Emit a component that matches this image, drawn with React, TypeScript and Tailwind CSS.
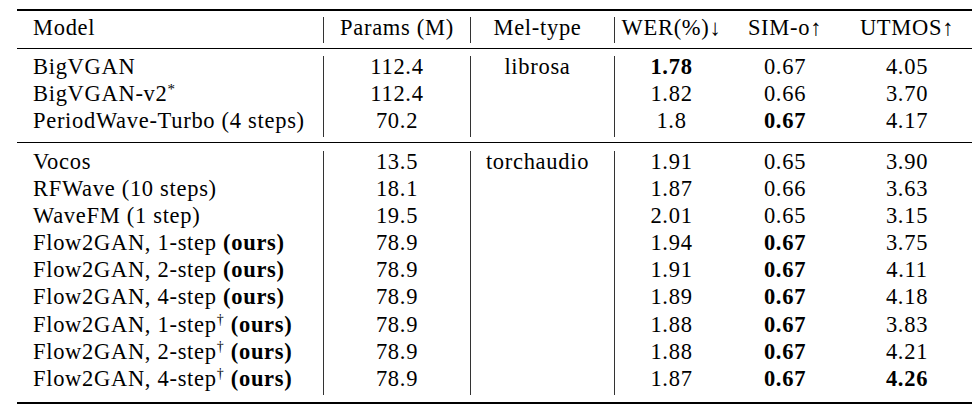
type Cell = { text: string; bold?: boolean }

type Row = {
  model: React.ReactNode
  params: string
  mel?: string
  wer: Cell
  sim: Cell
  utmos: Cell
}

const grid = 'grid grid-cols-[306px_147px_144px_114px_114px_130px]'

const Ours = () => <span className="font-bold">(ours)</span>
const Dag = () => <sup className="text-[14px] relative -top-[8px]">†</sup>

const section1: Row[] = [
  { model: 'BigVGAN', params: '112.4', mel: 'librosa', wer: { text: '1.78', bold: true }, sim: { text: '0.67' }, utmos: { text: '4.05' } },
  {
    model: (
      <>
        BigVGAN-v2<sup className="text-[15px] relative -top-[7px]">*</sup>
      </>
    ),
    params: '112.4',
    wer: { text: '1.82' },
    sim: { text: '0.66' },
    utmos: { text: '3.70' },
  },
  { model: 'PeriodWave-Turbo (4 steps)', params: '70.2', wer: { text: '1.8' }, sim: { text: '0.67', bold: true }, utmos: { text: '4.17' } },
]

const section2: Row[] = [
  { model: 'Vocos', params: '13.5', mel: 'torchaudio', wer: { text: '1.91' }, sim: { text: '0.65' }, utmos: { text: '3.90' } },
  { model: 'RFWave (10 steps)', params: '18.1', wer: { text: '1.87' }, sim: { text: '0.66' }, utmos: { text: '3.63' } },
  { model: 'WaveFM (1 step)', params: '19.5', wer: { text: '2.01' }, sim: { text: '0.65' }, utmos: { text: '3.15' } },
  { model: <>Flow2GAN, 1-step <Ours /></>, params: '78.9', wer: { text: '1.94' }, sim: { text: '0.67', bold: true }, utmos: { text: '3.75' } },
  { model: <>Flow2GAN, 2-step <Ours /></>, params: '78.9', wer: { text: '1.91' }, sim: { text: '0.67', bold: true }, utmos: { text: '4.11' } },
  { model: <>Flow2GAN, 4-step <Ours /></>, params: '78.9', wer: { text: '1.89' }, sim: { text: '0.67', bold: true }, utmos: { text: '4.18' } },
  { model: <>Flow2GAN, 1-step<Dag /> <Ours /></>, params: '78.9', wer: { text: '1.88' }, sim: { text: '0.67', bold: true }, utmos: { text: '3.83' } },
  { model: <>Flow2GAN, 2-step<Dag /> <Ours /></>, params: '78.9', wer: { text: '1.88' }, sim: { text: '0.67', bold: true }, utmos: { text: '4.21' } },
  { model: <>Flow2GAN, 4-step<Dag /> <Ours /></>, params: '78.9', wer: { text: '1.87' }, sim: { text: '0.67', bold: true }, utmos: { text: '4.26', bold: true } },
]

function Value({ cell }: { cell: Cell }) {
  return <span className={cell.bold ? 'font-bold' : ''}>{cell.text}</span>
}

function Section({ rows }: { rows: Row[] }) {
  return (
    <div className={grid}>
      {rows.map((r, i) => (
        <div key={i} className="contents">
          <div className="leading-[22px] pb-[5.2px] pl-4 whitespace-nowrap">{r.model}</div>
          <div className="leading-[22px] pb-[5.2px] text-center border-l border-[#333]">{r.params}</div>
          <div className="leading-[22px] pb-[5.2px] text-center border-l border-[#333] pr-[10px]">{r.mel ?? ''}</div>
          <div className="leading-[22px] pb-[5.2px] text-center border-l border-[#333]">
            <Value cell={r.wer} />
          </div>
          <div className="leading-[22px] pb-[5.2px] text-center">
            <Value cell={r.sim} />
          </div>
          <div className="leading-[22px] pb-[5.2px] text-center">
            <Value cell={r.utmos} />
          </div>
        </div>
      ))}
    </div>
  )
}

export default function App() {
  return (
    <div className="w-[980px] h-[414px] bg-white text-black [font-family:'Liberation_Serif','Times_New_Roman',serif] text-[22.5px] tracking-[0.7px] pt-[9px] pl-[17px]">
      <div className="w-[955px]">
        {/* top rule */}
        <div className="h-[1.6px] bg-black" />

        {/* header */}
        <div className={`${grid} mt-[6.7px]`}>
          <div className="leading-[22px] pb-[4px] pl-4">Model</div>
          <div className="leading-[22px] pb-[4px] text-center border-l border-[#333]">Params (M)</div>
          <div className="leading-[22px] pb-[4px] text-center border-l border-[#333] pr-[10px]">Mel-type</div>
          <div className="leading-[22px] pb-[4px] text-center border-l border-[#333]">WER(%)↓</div>
          <div className="leading-[22px] pb-[4px] text-center">SIM-o↑</div>
          <div className="leading-[22px] pb-[4px] text-center">UTMOS↑</div>
        </div>

        <div className="h-[1.2px] bg-black mt-[5px]" />

        <div className="mt-[6.1px]">
          <Section rows={section1} />
        </div>

        <div className="h-[1.2px] bg-black mt-[4.5px]" />

        <div className="mt-[7.7px]">
          <Section rows={section2} />
        </div>

        {/* bottom rule */}
        <div className="h-[2px] bg-black mt-[7px]" />
      </div>
    </div>
  )
}
